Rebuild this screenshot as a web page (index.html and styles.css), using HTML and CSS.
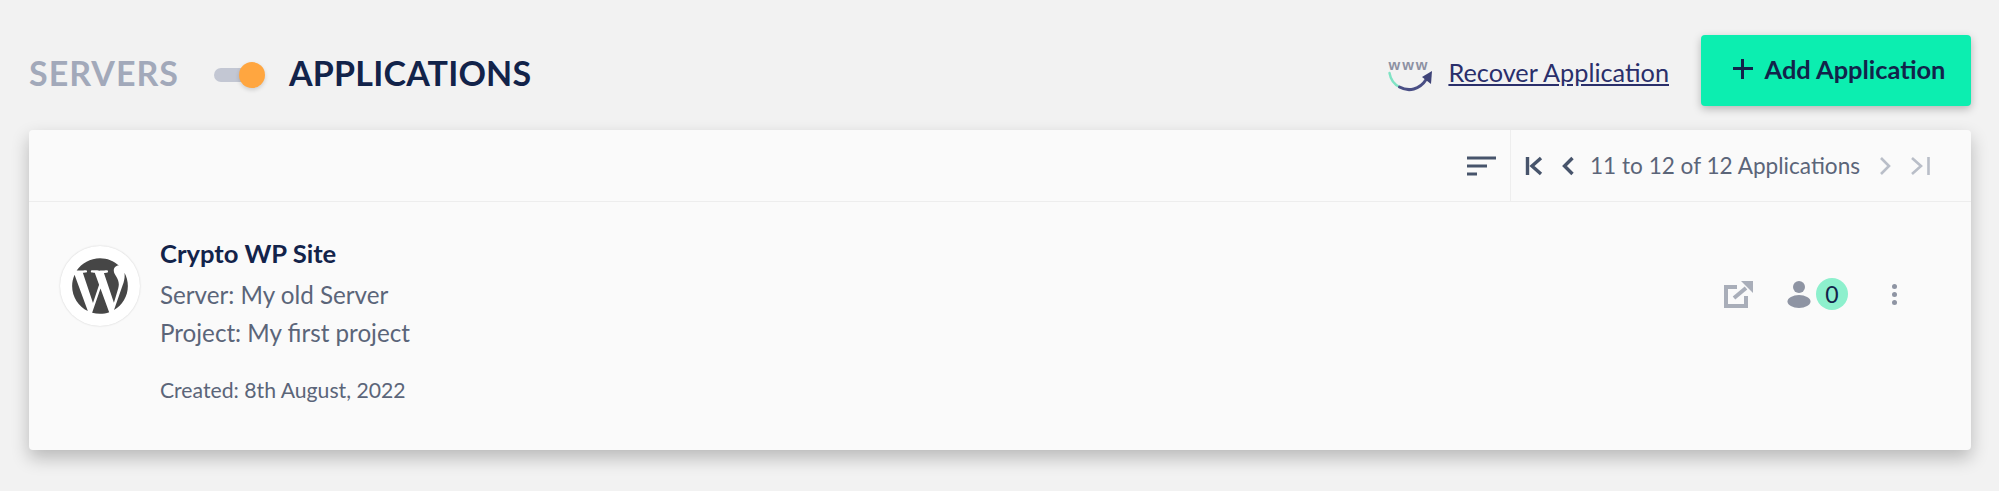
FILE: index.html
```html
<!DOCTYPE html>
<html lang="en">
<head>
    <meta charset="UTF-8">
    <title>Applications</title>
    <link rel="stylesheet" href="styles.css">
</head>
<body>
    <div class="page">
        <div class="top-bar">
            <div class="switcher">
                <span class="tab-off">SERVERS</span>
                <span class="toggle"><span class="knob"></span></span>
                <span class="tab-on">APPLICATIONS</span>
            </div>
            <div class="top-actions">
                <svg class="www-icon" width="46" height="42" viewBox="0 -8 46 42">
                    <text x="21" y="10" class="www-text">www</text>
                    <path d="M1.500 13c1 6 4 11 10 14" fill="none" stroke="#7fe3c4" stroke-width="2.400" stroke-linecap="round"/>
                    <path d="M11.500 27c9 5 20 3 27-8" fill="none" stroke="#4a4f85" stroke-width="3" stroke-linecap="round"/>
                    <path d="M44 11l-1 13-9-7z" fill="#3f4478"/>
                </svg>
                <a class="recover" href="#">Recover Application</a>
                <button class="add-btn"><span class="plus"></span>Add Application</button>
            </div>
        </div>

        <div class="card">
            <div class="toolbar">
                <svg class="sort-icon" width="31" height="20" viewBox="0 0 31 20">
                    <path d="M1 2h29M1 10h20M1 18h10" stroke="#47546b" stroke-width="3" fill="none"/>
                </svg>
                <div class="pager">
                    <svg width="18" height="20" viewBox="0 0 18 20"><path d="M2.500 1v18M16 2l-9 8 9 8" stroke="#47546b" stroke-width="3.400" fill="none"/></svg>
                    <svg class="prev" width="14" height="20" viewBox="0 0 14 20"><path d="M11.500 2L3.500 10l8 8" stroke="#47546b" stroke-width="3.400" fill="none"/></svg>
                    <span class="count">11 to 12 of 12 Applications</span>
                    <svg class="next" width="14" height="20" viewBox="0 0 14 20"><path d="M3 2l8 8-8 8" stroke="#b9bec8" stroke-width="2.600" fill="none"/></svg>
                    <svg class="last" width="22" height="20" viewBox="0 0 22 20"><path d="M2 2l9 8-9 8M18.500 1v18" stroke="#b9bec8" stroke-width="2.600" fill="none"/></svg>
                </div>
            </div>
            <div class="app-row">
                <div class="logo">
                    <svg width="62" height="62" viewBox="0 0 24 24" fill="#464646">
                        <path d="M21.469 6.825c.84 1.537 1.318 3.3 1.318 5.175 0 3.979-2.156 7.456-5.363 9.325l3.295-9.527c.615-1.54.82-2.771.82-3.864 0-.405-.026-.78-.07-1.11m-7.981.105c.647-.03 1.232-.105 1.232-.105.582-.075.514-.93-.067-.899 0 0-1.755.135-2.88.135-1.064 0-2.85-.15-2.85-.15-.585-.03-.661.855-.075.885 0 0 .54.061 1.125.09l1.68 4.605-2.37 7.08L5.354 6.9c.649-.03 1.234-.1 1.234-.1.585-.075.516-.93-.065-.896 0 0-1.746.138-2.874.138-.2 0-.438-.008-.69-.015C4.911 3.15 8.235 1.215 12 1.215c2.809 0 5.365 1.072 7.286 2.833-.046-.003-.091-.009-.141-.009-1.06 0-1.812.923-1.812 1.914 0 .89.513 1.643 1.06 2.531.411.72.89 1.643.89 2.977 0 .915-.354 1.994-.821 3.479l-1.075 3.585-3.9-11.61.001.014zM12 22.784c-1.059 0-2.081-.153-3.048-.437l3.237-9.406 3.315 9.087c.024.053.05.101.078.149-1.12.393-2.325.609-3.582.609M1.211 12c0-1.564.336-3.05.935-4.39L7.29 21.709C3.694 19.96 1.212 16.271 1.211 12"/>
                    </svg>
                </div>
                <div class="app-info">
                    <div class="app-name">Crypto WP Site</div>
                    <div class="app-line">Server: My old Server</div>
                    <div class="app-line">Project: My first project</div>
                    <div class="app-created">Created: 8th August, 2022</div>
                </div>
                <div class="app-actions">
                    <svg class="open-icon" width="30" height="27" viewBox="0 0 30 27">
                        <path d="M14 6H3v19h20V15" fill="none" stroke="#a9aeb9" stroke-width="4"/>
                        <path d="M11 17L23 7" fill="none" stroke="#a9aeb9" stroke-width="4"/>
                        <path d="M18 0h12v12z" fill="#a9aeb9"/>
                    </svg>
                    <svg class="person-icon" width="24" height="28" viewBox="0 0 24 28" fill="#8e94a3">
                        <circle cx="12" cy="7" r="6"/>
                        <ellipse cx="12" cy="21.500" rx="11.500" ry="6.500"/>
                    </svg>
                    <span class="badge">0</span>
                    <span class="dots"><i></i><i></i><i></i></span>
                </div>
            </div>
        </div>
    </div>
</body>
</html>
```

FILE: styles.css
```css
body {
    margin: 0;
    background-color: #f2f2f2;
    font-family: "Lato", "Open Sans", sans-serif;
}
.page {
    padding: 35px 28px 41px 29px;
}
.top-bar {
    display: flex;
    justify-content: space-between;
    height: 95px;
}
.switcher {
    display: flex;
    align-items: center;
    height: 74px;
}
.tab-off {
    font-size: 34px;
    font-weight: 700;
    letter-spacing: 1px;
    color: #a2a9ba;
    width: 185px;
}
.tab-on {
    font-size: 34px;
    font-weight: 700;
    letter-spacing: 0.2px;
    color: #12234a;
    margin-left: 24px;
}
.toggle {
    width: 40px;
    height: 14px;
    border-radius: 7px;
    background-color: #c3c7d3;
    position: relative;
    margin-top: 6px;
    display: inline-block;
    margin-right: 11px;
}
.knob {
    position: absolute;
    right: -11px;
    top: -6px;
    width: 26px;
    height: 26px;
    border-radius: 50%;
    background-color: #ffa640;
    box-shadow: 0 2px 4px rgba(0, 0, 0, 0.15);
}
.top-actions {
    display: flex;
    align-items: flex-start;
}
.www-icon {
    margin-top: 17px;
    margin-right: 14px;
}
.www-text {
    font-family: "Liberation Sans", sans-serif;
    font-size: 15px;
    font-weight: 700;
    letter-spacing: 2px;
    fill: #8d91a3;
    text-anchor: middle;
}
.recover {
    color: #2a2f6b;
    font-size: 25.300px;
    margin-top: 22px;
    margin-right: 32px;
}
.add-btn {
    width: 270px;
    height: 71px;
    border: none;
    border-radius: 4px;
    background-color: #0ceeb0;
    box-shadow: 0 3px 8px rgba(0, 0, 0, 0.25);
    color: #12234a;
    font-family: inherit;
    font-size: 25.400px;
    font-weight: 700;
    display: flex;
    align-items: center;
    justify-content: center;
    padding: 0 0 4px 6px;
}
.plus {
    width: 20px;
    height: 20px;
    margin-right: 12px;
    background: linear-gradient(#12234a, #12234a) center / 100% 3px no-repeat,
        linear-gradient(#12234a, #12234a) center / 3px 100% no-repeat;
}
.card {
    background-color: #fafafa;
    border-radius: 4px;
    box-shadow: 0 8px 18px rgba(0, 0, 0, 0.24);
    height: 320px;
}
.toolbar {
    height: 71px;
    border-bottom: 1px solid #ededed;
    display: flex;
    justify-content: flex-end;
    align-items: stretch;
}
.sort-icon {
    align-self: center;
    margin-right: 13px;
}
.pager {
    display: flex;
    align-items: center;
    width: 461px;
    box-sizing: border-box;
    border-left: 1px solid #eeeeee;
    padding-left: 14px;
}
.prev {
    margin-left: 18px;
}
.count {
    font-size: 22.600px;
    color: #5b6579;
    margin-left: 15px;
}
.next {
    margin-left: 18px;
}
.last {
    margin-left: 18px;
}
.app-row {
    display: flex;
    padding: 44px 0 0 31px;
}
.logo {
    width: 80px;
    height: 80px;
    border-radius: 50%;
    background-color: #fff;
    box-shadow: 0 0 2px rgba(0, 0, 0, 0.18);
    display: flex;
    align-items: center;
    justify-content: center;
    flex-shrink: 0;
}
.app-info {
    margin-left: 20px;
    margin-top: -11px;
    flex: 1;
}
.app-name {
    font-size: 25.600px;
    font-weight: 700;
    color: #12234a;
    line-height: 36px;
}
.app-line {
    font-size: 24.200px;
    color: #5b6579;
    line-height: 38px;
    margin-top: 5px;
}
.app-line + .app-line {
    margin-top: 0;
}
.app-created {
    font-size: 21.200px;
    color: #5b6579;
    line-height: 28px;
    margin-top: 24px;
}
.app-actions {
    display: flex;
    align-items: center;
    height: 32px;
    margin-top: 32px;
    padding-right: 74px;
}
.person-icon {
    margin-left: 34px;
}
.badge {
    width: 32px;
    height: 32px;
    border-radius: 50%;
    background-color: #8df0cd;
    color: #12234a;
    font-size: 23px;
    display: flex;
    align-items: center;
    justify-content: center;
    margin-left: 5px;
}
.dots {
    display: flex;
    flex-direction: column;
    gap: 3px;
    margin-left: 44px;
}
.dots i {
    width: 5px;
    height: 5px;
    border-radius: 50%;
    background-color: #8e94a3;
}
```
